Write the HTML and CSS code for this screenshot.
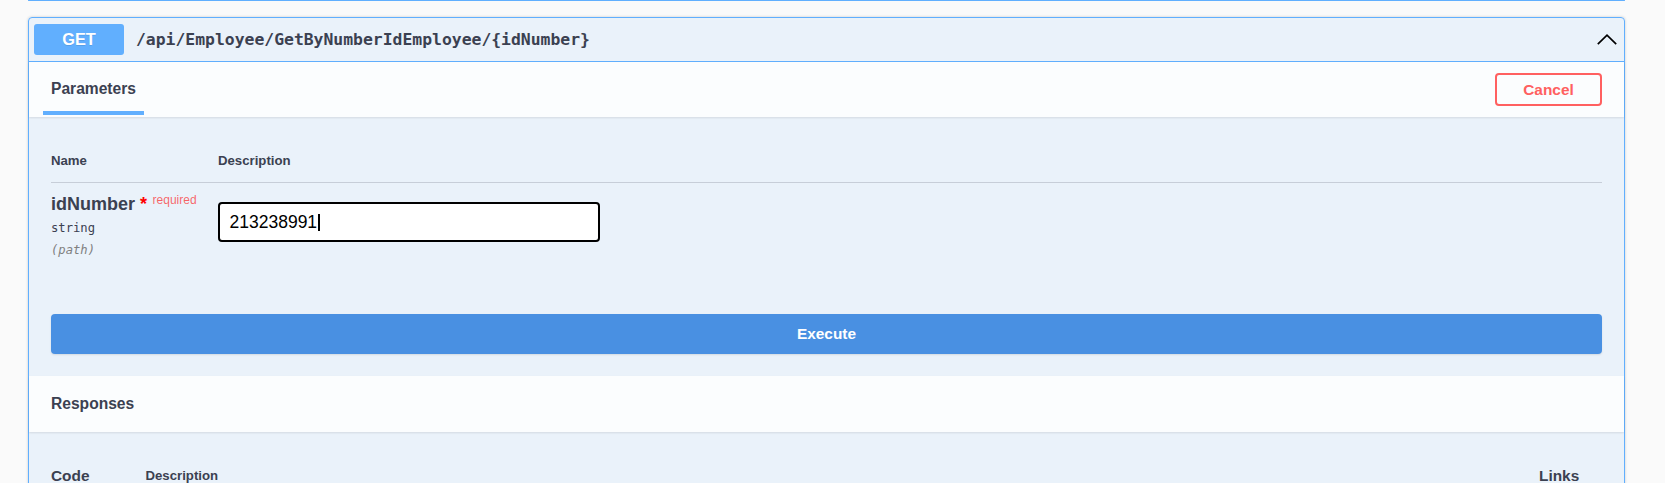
FILE: index.html
```html
<!DOCTYPE html>
<html>
<head>
<meta charset="utf-8">
<title>Swagger UI</title>
<link rel="stylesheet" href="styles.css">
</head>
<body>
<div class="wrapper">
  <div class="opblock prev"></div>
  <div class="opblock">
    <div class="summary">
      <span class="method">GET</span>
      <span class="path">/api/Employee/GetByNumberIdEmployee/{idNumber}</span>
      <svg class="arrow" width="20" height="11" viewBox="0 0 20 11"><polyline points="0.8,10.2 10,1.2 19.2,10.2" fill="none" stroke="#000" stroke-width="1.7"/></svg>
    </div>
    <div class="section-header">
      <div class="tab"><span class="tab-label">Parameters</span><span class="tab-bar"></span></div>
      <button class="btn-cancel">Cancel</button>
    </div>
    <div class="params">
      <div class="params-head"><div class="col-name">Name</div><div class="col-desc">Description</div></div>
      <div class="param-row">
        <div class="col-name">
          <div class="param-name">idNumber<span class="star">&nbsp;*</span><span class="req">required</span></div>
          <div class="param-type">string</div>
          <div class="param-in">(path)</div>
        </div>
        <div class="col-desc"><div class="input">213238991<span class="caret"></span></div></div>
      </div>
      <button class="btn-execute">Execute</button>
    </div>
    <div class="section-header resp"><h4 class="sec-title">Responses</h4></div>
    <div class="responses">
      <div class="resp-head"><span class="rc-code">Code</span><span class="rc-desc">Description</span><span class="rc-links">Links</span></div>
    </div>
  </div>
</div>
</body>
</html>
```
FILE: styles.css
```css
html { overflow: hidden; }
body {
  margin: 0;
  background: #fafafa;
  font-family: "Liberation Sans", Arial, sans-serif;
  color: #3b4151;
}
.wrapper { padding: 0 40px 0 28px; }
.opblock {
  border: 1px solid #61affe;
  border-radius: 4px;
  background: rgba(97, 175, 254, 0.1);
  box-shadow: 0 0 3px rgba(0, 0, 0, 0.19);
}
.prev {
  height: 0;
  border-top: none;
  border-radius: 0 0 4px 4px;
  margin-bottom: 16px;
  box-shadow: none;
}
.summary {
  display: flex;
  align-items: center;
  padding: 6px 7px 6px 5px;
  border-bottom: 1px solid #61affe;
}
.method {
  width: 90px;
  height: 31px;
  display: flex;
  align-items: center;
  justify-content: center;
  background: #61affe;
  color: #fff;
  font-weight: 700;
  font-size: 16.3px;
  border-radius: 3px;
  text-shadow: 0 1px 0 rgba(0, 0, 0, 0.1);
}
.path {
  margin-left: 12px;
  font-family: "DejaVu Sans Mono", monospace;
  font-weight: 600;
  font-size: 16.4px;
  color: #3b4151;
}
.arrow { margin-left: auto; display: block; }
.section-header {
  display: flex;
  align-items: center;
  justify-content: space-between;
  height: 55px;
  padding: 0 22px;
  box-sizing: border-box;
  background: rgba(255, 255, 255, 0.8);
  box-shadow: 0 1px 2px rgba(0, 0, 0, 0.1);
}
.tab {
  align-self: stretch;
  display: flex;
  flex-direction: column;
  align-items: flex-start;
  padding-top: 17px;
}
.tab-label {
  font-size: 15.6px;
  font-weight: 700;
  line-height: 20px;
}
.tab-bar {
  display: block;
  width: 120%;
  margin-left: -10%;
  height: 4px;
  margin-top: 12px;
  background: #61affe;
}
.btn-cancel {
  width: 107px;
  height: 33px;
  border: 2px solid #ff6060;
  border-radius: 4px;
  background: transparent;
  color: #ff6060;
  font: 700 15.4px "Liberation Sans", Arial, sans-serif;
  padding: 0;
}
.params { padding: 36px 22px 22px; }
.params-head {
  display: flex;
  padding-bottom: 13px;
  border-bottom: 1px solid rgba(59, 65, 81, 0.2);
  font-size: 13.2px;
  font-weight: 700;
  line-height: 16px;
}
.col-name { width: 167px; flex: none; }
.col-desc { flex: 1; }
.param-row { display: flex; }
.param-row .col-name { padding-top: 9px; }
.param-row .col-desc { padding-top: 19px; }
.param-name {
  font-size: 18px;
  font-weight: 700;
  line-height: 24px;
  white-space: nowrap;
}
.star { color: red; }
.req {
  font-size: 12px;
  font-weight: 400;
  line-height: 12px;
  color: rgba(255, 0, 0, 0.6);
  padding-left: 5.5px;
  vertical-align: 6px;
}
.param-type {
  font-family: "DejaVu Sans Mono", monospace;
  font-size: 12.2px;
  font-weight: 400;
  line-height: 24px;
}
.param-in {
  font-family: "DejaVu Sans Mono", monospace;
  font-size: 12.2px;
  font-weight: 400;
  font-style: italic;
  line-height: 20px;
  color: #808080;
}
.input {
  width: 382px;
  height: 40px;
  box-sizing: border-box;
  border: 2px solid #000;
  border-radius: 4px;
  background: #fff;
  padding: 0 9.5px;
  display: flex;
  align-items: center;
  font-size: 17.5px;
  color: #000;
}
.caret {
  display: inline-block;
  width: 2px;
  height: 17px;
  background: #000;
  margin-left: 1px;
}
.btn-execute {
  display: block;
  width: 100%;
  height: 40px;
  margin-top: 54px;
  border: none;
  border-radius: 4px;
  background: #4990e2;
  color: #fff;
  font: 700 15.4px "Liberation Sans", Arial, sans-serif;
  box-shadow: 0 1px 2px rgba(0, 0, 0, 0.1);
}
.resp { height: 56px; }
.sec-title {
  margin: 0;
  font-size: 15.6px;
  font-weight: 700;
}
.responses { padding: 34px 22px 40px; }
.resp-head {
  display: flex;
  align-items: center;
  line-height: 20px;
  font-weight: 700;
}
.rc-code { width: 94.5px; flex: none; font-size: 15.4px; }
.rc-desc { flex: 1; font-size: 13.2px; }
.rc-links { width: 63px; flex: none; font-size: 15.4px; }
```
